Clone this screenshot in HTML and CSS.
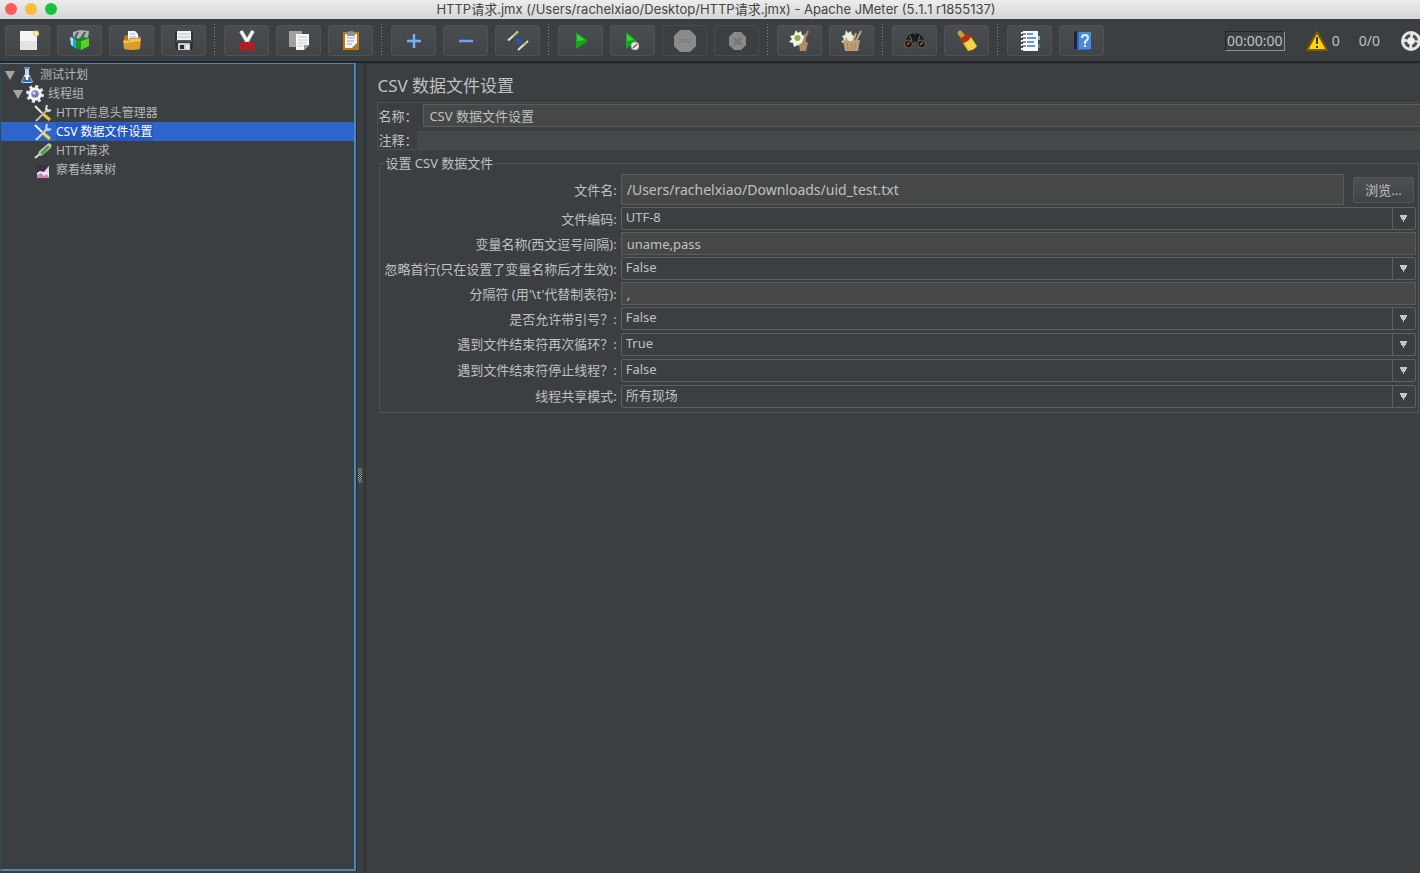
FILE: index.html
```
<!DOCTYPE html>
<html lang="zh-CN">
<head>
<meta charset="utf-8">
<meta name="viewport" content="width=device-width, initial-scale=1">
<title>HTTP请求.jmx - Apache JMeter</title>
<link rel="stylesheet" href="styles.css">
</head>
<body>
<div class="window">
<header class="titlebar">
  <div class="lights">
    <button class="light light-close" aria-label="关闭"></button>
    <button class="light light-min" aria-label="最小化"></button>
    <button class="light light-zoom" aria-label="缩放"></button>
  </div>
  <h1 class="window-title">HTTP请求.jmx (/Users/rachelxiao/Desktop/HTTP请求.jmx) - Apache JMeter (5.1.1 r1855137)</h1>
</header>

<div class="toolbar" role="toolbar" aria-label="工具栏">
  <button class="tool" aria-label="新建"><svg viewBox="0 0 24 24"><path d="M4 2h17v19H4z" fill="#f4f4f4"/><path d="M4 12h17v9H4z" fill="#e3e3e3"/><circle cx="20" cy="4.500" r="3" fill="#e9d77a"/><circle cx="20" cy="4.500" r="1.500" fill="#fff6c0"/></svg></button>
  <button class="tool" aria-label="模板"><svg viewBox="0 0 24 24"><path d="M5 3l7-2 9 1-1 7-9 1-6-2z" fill="#a9b3b5"/><path d="M6 8l3-5 2 0-3 6zm6 1 4-6 2 0-3 6z" fill="#4e595c"/><path d="M2 8l7 3v9l-5-3z" fill="#20a7cf"/><path d="M2 8l3 1v8l-2-1z" fill="#9be8f3"/><path d="M8 11l5 1v9l-5-2z" fill="#139a18"/><path d="M13 12l8-3v8l-8 4z" fill="#56d32a"/><path d="M9 10l6-2 6 1-8 3z" fill="#168c1a"/></svg></button>
  <button class="tool" aria-label="打开"><svg viewBox="0 0 24 24"><path d="M4 7l4-1h9l4 2v5H4z" fill="#b87d16"/><path d="M8 2h7l3 3v8H8z" fill="#f1f4fa"/><path d="M10 5h5M10 8h6" stroke="#a9b5ca"/><path d="M3 11h5l2-2h11l-1 11q-8 2-16 0z" fill="#dc9b2a"/><path d="M4 12h5l2-2h9v2l-16 2z" fill="#f6c760"/></svg></button>
  <button class="tool" aria-label="保存"><svg viewBox="0 0 24 24"><path d="M3 2h18v17l-2 2H5l-2-2z" fill="#303235"/><path d="M5 2h14v9H5z" fill="#edf2f7"/><path d="M6 5h12M6 8h12" stroke="#b8c4d2"/><path d="M4 12h16" stroke="#73797f"/><path d="M6 14h12v7H6z" fill="#c9cacb"/><path d="M8 16h4v4H8z" fill="#292b2d"/><path d="M14 16h3v4h-3z" fill="#f0f0f0"/></svg></button>
  <span class="divider"></span>
  <button class="tool" aria-label="剪切"><svg viewBox="0 0 24 24"><path d="M6 2l7 12M18 2l-7 12" stroke="#c5c8c9" stroke-width="4"/><path d="M6 2l6 10M18 2l-6 10" stroke="#fff" stroke-width="2"/><circle cx="8" cy="17.500" r="2.700" fill="none" stroke="#c5161d" stroke-width="3"/><circle cx="16" cy="17.500" r="2.700" fill="none" stroke="#c5161d" stroke-width="3"/><path d="M8 13h8l-2 4h-4z" fill="#c5161d"/></svg></button>
  <button class="tool" aria-label="复制"><svg viewBox="0 0 24 24"><path d="M2 2h13v16H2z" fill="#a0a2a2"/><path d="M9 5h13v11l-5 5H9z" fill="#f5f5f5"/><path d="M11 8h9M11 11h9M11 14h8M11 17h5" stroke="#c7c9ca"/><path d="M17 21v-5h5z" fill="#999"/></svg></button>
  <button class="tool" aria-label="粘贴"><svg viewBox="0 0 24 24"><path d="M4 3h16v18H4z" fill="#b87912"/><path d="M6 5h12v14H6z" fill="#f3f3f3"/><path d="M8 5q0-3 4-3t4 3v2H8z" fill="#909391"/><path d="M8 9h8M8 12h7M8 15h5" stroke="#a0a3a6"/><path d="M18 14v5h-5z" fill="#778057"/></svg></button>
  <span class="divider"></span>
  <button class="tool" aria-label="展开"><svg viewBox="0 0 24 24"><path d="M12 5v14M5 12h14" stroke="#77b0f5" stroke-width="2.500"/></svg></button>
  <button class="tool" aria-label="折叠"><svg viewBox="0 0 24 24"><path d="M5 12h14" stroke="#6ca5ef" stroke-width="2.500"/></svg></button>
  <button class="tool" aria-label="切换"><svg viewBox="0 0 24 24"><path d="M2 11.500l10-9M12 21l10-9" stroke="#e3e6d6" stroke-width="2"/><path d="M7 7l4-4M17 16l4-3" stroke="#a8ba5d" stroke-width="1.500"/><path d="M9 8l3 2 3-1 1 6-6 0 1-2z" fill="#2d55a5"/></svg></button>
  <span class="divider"></span>
  <button class="tool" aria-label="启动"><svg viewBox="0 0 24 24"><path d="M7 3l12 9-12 8z" fill="#11a818"/><path d="M8 5l8 6-8 1z" fill="#38cf3d"/></svg></button>
  <button class="tool" aria-label="无停顿启动"><svg viewBox="0 0 24 24"><path d="M5 3l11 9-11 8z" fill="#11a818"/><path d="M6 5l7 6-7 1z" fill="#38cf3d"/><circle cx="14" cy="17" r="3.800" fill="#f6eeee" stroke="#b9c2c8"/><path d="M12 19l4-4" stroke="#bf3940" stroke-width="1.500"/></svg></button>
  <button class="tool" aria-label="停止" disabled><svg viewBox="0 0 24 24"><path d="M7 1h10l6 6v10l-6 6H7l-6-6V7z" fill="#8a8c8c"/><path d="M6 12h12" stroke="#818484" stroke-width="4"/></svg></button>
  <button class="tool" aria-label="关闭线程" disabled><svg viewBox="0 0 24 24"><path d="M9 3h7l5 5v8l-5 5H9l-5-5V8z" fill="#888a8a"/><path d="M9 9l7 7M16 9l-7 7" stroke="#757879" stroke-width="2.500"/></svg></button>
  <span class="divider"></span>
  <button class="tool" aria-label="清除"><svg viewBox="0 0 24 24"><path d="M8 1l2 3 3-2 1 4 4 1-2 3 2 4-4 0-1 4-3-2-4 2-1-4-4-1 3-3-2-3 4-1z" fill="#f2f4e8"/><circle cx="9.500" cy="9" r="3" fill="#8eaf43"/><path d="M11 15l9-2-2 9h-6z" fill="#b58d62"/><path d="M14 16l6-14M17 17V5" stroke="#a98961" stroke-width="2"/></svg></button>
  <button class="tool" aria-label="清除全部"><svg viewBox="0 0 24 24"><path d="M6 1l2 3 3-2 1 4 3 1-2 3 1 4-6 2-4-2-3-1 3-3-2-3 3-1z" fill="#ece9dc"/><path d="M3 11l7 1 10-1-2 11H5z" fill="#bd9f78"/><path d="M13 13l3-9M16 12l5-10M7 13l-1-4" stroke="#b8a583" stroke-width="2"/><path d="M7 14l1 7M12 14v7M16 14l-2 7" stroke="#a78661"/></svg></button>
  <span class="divider"></span>
  <button class="tool" aria-label="查找"><svg viewBox="0 0 24 24"><path d="M5 7l5-3 2 2 2-2 5 3 4 8-8 3-2-6h-2l-2 6-8-3z" fill="#191a1b"/><path d="M7 7l2 5M17 7l-2 5" stroke="#74736c"/><circle cx="5.500" cy="15" r="4" fill="#1b1918" stroke="#756657"/><circle cx="18.500" cy="15" r="4" fill="#1b1918" stroke="#756657"/><path d="M4 16l3-3M17 16l3-3" stroke="#946b4b" stroke-width="1.500"/></svg></button>
  <button class="tool" aria-label="重置搜索"><svg viewBox="0 0 24 24"><path d="M5 4l4 5" stroke="#c79c3e" stroke-width="5" stroke-linecap="round"/><path d="M5 10l8-6 3 4-8 7z" fill="#b62c18"/><path d="M8 14q5-1 8-6l6 9q-2 4-9 5z" fill="#f2cd2d"/><path d="M12 14l4 6M15 12l4 6" stroke="#fff08a"/></svg></button>
  <span class="divider"></span>
  <button class="tool" aria-label="函数助手"><svg viewBox="0 0 24 24"><path d="M5 2h15v20H5z" fill="#f7f9fc"/><path d="M9 5h6M9 9h9M9 13h7M9 17h8" stroke="#3b76d0" stroke-width="1.500"/><path d="M3 4h5M3 8h5M3 12h5M3 16h5M3 20h5" stroke="#f7f9fc" stroke-width="2"/><path d="M4 5h4M4 9h4M4 13h4M4 17h4" stroke="#23262c"/><path d="M20 7h2v4h-2z" fill="#79b7d8"/><path d="M20 15h2v4h-2z" fill="#339d65"/></svg></button>
  <button class="tool" aria-label="帮助"><svg viewBox="0 0 24 24"><path d="M4 3l4-1v19l-4-1z" fill="#1c2632"/><path d="M7 3h13v18H7z" fill="#2e69b6"/><path d="M9 3h12v17H9z" fill="#4b8bd8"/><path d="M12 9q0-3 3-3t3 3q0 1-3 4v2M15 16v2" fill="none" stroke="#e7f1ff" stroke-width="2"/></svg></button>
  <div class="status">
    <output class="timer">00:00:00</output>
    <button class="warn"><svg viewBox="0 0 24 22"><path d="M12 2L22 20H2z" fill="#ffd600" stroke="#765d0b" stroke-width="2" stroke-linejoin="round"/><path d="M12 7v7M12 16v2" stroke="#3b3410" stroke-width="2"/></svg>0</button>
    <span class="threads">0/0</span>
    <svg class="lifebuoy" viewBox="0 0 20 22"><circle cx="11" cy="11" r="10" fill="#e5e5e5"/><circle cx="11" cy="11" r="5.500" fill="none" stroke="#4c4e50" stroke-width="3" stroke-dasharray="5.600 3.040" stroke-dashoffset="-1.520"/><circle cx="11" cy="11" r="3" fill="#f2f2f2"/></svg>
  </div>
</div>

<div class="workspace">
  <nav class="tree-pane" aria-label="测试计划树">
    <ul class="tree" role="tree">
      <li class="node depth-0" role="treeitem"><svg class="twist" viewBox="0 0 12 12"><path d="M1 2h10L6 11z"/></svg><svg class="node-icon" viewBox="0 0 16 18"><path d="M6 2h4v6l4 8-2 1H4l-2-1 4-8z" fill="#c4dbe7"/><path d="M5 11h6l2 5H3z" fill="#2468b7"/><path d="M8 9v5" stroke="#fff" stroke-width="2.500"/><path d="M5 2h6" stroke="#5f92bd" stroke-width="2"/></svg>测试计划</li>
      <li class="node depth-1" role="treeitem"><svg class="twist" viewBox="0 0 12 12"><path d="M1 2h10L6 11z"/></svg><svg class="node-icon" viewBox="0 0 16 18"><circle cx="8" cy="9" r="7.500" fill="none" stroke="#e4e6ec" stroke-width="3" stroke-dasharray="3 2.890"/><circle cx="8" cy="9" r="5.500" fill="#cad0df" stroke="#f5f6fa" stroke-width="2.500"/><circle cx="8" cy="9" r="3.500" fill="#7180b0"/><circle cx="7" cy="8" r="1.500" fill="#d5dcf4"/></svg>线程组</li>
      <li class="node depth-2" role="treeitem"><svg class="node-icon" viewBox="0 0 16 18"><path d="M1 17L13 5" stroke="#b8bcbd" stroke-width="2"/><path d="M12 1l-1 4 2 2 3-1" fill="none" stroke="#d8dcde" stroke-width="2"/><path d="M0 2l7 7" stroke="#eff0e9" stroke-width="2"/><path d="M8 10l7 6" stroke="#d9ae2f" stroke-width="3.500"/><path d="M8 10l6 5" stroke="#ffe270"/></svg>HTTP信息头管理器</li>
      <li class="node depth-2 selected" role="treeitem" aria-selected="true"><svg class="node-icon" viewBox="0 0 16 18"><path d="M1 17L13 5" stroke="#d0dbe2" stroke-width="2"/><path d="M12 1l-1 4 2 2 3-1" fill="none" stroke="#b8d4ee" stroke-width="2"/><path d="M0 2l7 7" stroke="#eff0e9" stroke-width="2"/><path d="M8 10l7 6" stroke="#e0c840" stroke-width="3.500"/><path d="M8 10l6 5" stroke="#ffe98a"/></svg><span class="node-text">CSV 数据文件设置</span></li>
      <li class="node depth-2" role="treeitem"><svg class="node-icon" viewBox="0 0 16 18"><path d="M0 16l6-5" stroke="#d9d9d9" stroke-width="2"/><path d="M6 11l8-7" stroke="#c1cbb9" stroke-width="5" stroke-linecap="round"/><path d="M7 11l6-6" stroke="#4c9c4c" stroke-width="3" stroke-linecap="round"/></svg>HTTP请求</li>
      <li class="node depth-2" role="treeitem"><svg class="node-icon" viewBox="0 0 16 18"><path d="M2 4h12v13H2z" fill="#393248"/><path d="M2 12l3-2 4 1 5-6v12H2z" fill="#f3e6f2"/><path d="M2 14l4-2 3 3 3-2 2 4H2z" fill="#cf83b5"/><path d="M9 11l5-6v7z" fill="#d9d4ef"/></svg>察看结果树</li>
    </ul>
  </nav>
  <div class="splitter" role="separator"><span class="grip"></span></div>

  <main class="editor">
    <h2 class="editor-title">CSV 数据文件设置</h2>
    <div class="identity">
      <label for="name">名称：</label><input id="name" class="field name-field" value="CSV 数据文件设置">
      <label for="comment">注释：</label><input id="comment" class="field comment-field">
    </div>
    <fieldset class="settings">
      <legend>设置 CSV 数据文件</legend>
      <div class="form">
        <label for="file">文件名:</label>
        <div class="file-row"><input id="file" class="field file-field" value="/Users/rachelxiao/Downloads/uid_test.txt"><button class="browse">浏览...</button></div>
        <label for="enc">文件编码:</label>
        <div class="combo"><select id="enc"><option>UTF-8</option></select></div>
        <label for="vars">变量名称(西文逗号间隔):</label>
        <input id="vars" class="field" value="uname,pass">
        <label for="skip">忽略首行(只在设置了变量名称后才生效):</label>
        <div class="combo"><select id="skip"><option>False</option><option>True</option></select></div>
        <label for="delim">分隔符 (用'\t'代替制表符):</label>
        <input id="delim" class="field" value=",">
        <label for="quoted">是否允许带引号？:</label>
        <div class="combo"><select id="quoted"><option>False</option><option>True</option></select></div>
        <label for="recycle">遇到文件结束符再次循环？:</label>
        <div class="combo stacked"><select id="recycle"><option>True</option><option>False</option></select></div>
        <label for="stop">遇到文件结束符停止线程？:</label>
        <div class="combo stacked"><select id="stop"><option>False</option><option>True</option></select></div>
        <label for="share">线程共享模式:</label>
        <div class="combo stacked"><select id="share"><option>所有现场</option></select></div>
      </div>
    </fieldset>
  </main>
</div>
</div>
</body>
</html>
```
FILE: styles.css
```
* { box-sizing: border-box; }
body {
  margin: 0;
  background: #3c3f41;
  color: #bfc1c2;
  font: 13px/18px "Noto Sans", "Noto Sans CJK SC", sans-serif;
}
button, input, select { font: inherit; color: inherit; margin: 0; }
.window { display: flex; flex-direction: column; height: 100vh; overflow: hidden; }

.titlebar {
  display: grid;
  grid-template-columns: 1fr auto 1fr;
  align-items: center;
  height: 19px;
  flex: none;
  padding: 0 5px 2px;
  background: linear-gradient(#ececec, #d6d6d6);
}
.lights { display: flex; gap: 8px; }
.light { width: 12px; height: 12px; padding: 0; border: 0; border-radius: 50%; }
.light-close { background: #fc5b57; }
.light-min { background: #fdbb3c; }
.light-zoom { background: #15c33f; }
.window-title {
  margin: 0;
  padding-left: 12px;
  color: #444;
  font: 13px/16px Inter, "Noto Sans CJK SC", sans-serif;
  font-kerning: none;
  white-space: nowrap;
}

.toolbar {
  display: flex;
  align-items: center;
  gap: 7px;
  flex: none;
  height: 42px;
  padding: 1px 0 0 5px;
}
.tool {
  display: grid;
  place-items: center;
  flex: none;
  width: 45px;
  height: 31px;
  padding: 0;
  border: 1px solid #505355;
  border-radius: 3px;
  background: linear-gradient(#4a4e50, #414547);
}
.tool:disabled { background: #3c3f41; border-color: #484b4d; }
.tool svg { width: 24px; height: 24px; }
.divider {
  flex: none;
  width: 4px;
  height: 33px;
  background: repeating-linear-gradient(#85888a 0 1px, transparent 1px 3px) 1px 0 / 1px 100% no-repeat;
}
.status { display: flex; align-items: center; margin-left: auto; flex: none; font-size: 14px; }
.timer {
  width: 60px;
  height: 20px;
  border: 1px solid;
  border-color: #232526 #8e9192 #8e9192 #232526;
  line-height: 18px;
  text-align: center;
}
.warn { display: flex; align-items: center; gap: 3px; padding: 0; margin-left: 20px; border: 0; background: none; }
.warn svg { width: 24px; height: 22px; }
.threads { margin-left: 19px; }
.lifebuoy { width: 20px; height: 22px; margin-left: 20px; }

.workspace { display: flex; flex: 1; min-height: 0; margin-bottom: 2px; border-top: 2px solid #242627; }
.tree-pane { flex: none; width: 25.1%; border: 1px solid #4a88b5; border-width: 1px 2px 2px 1px; border-left-color: #2d4a5e; }
.tree { margin: 0; padding: 1px 0 0; list-style: none; font-size: 12px; }
.node { display: flex; align-items: center; height: 19px; color: #b4b7b9; white-space: nowrap; }
.twist { width: 12px; height: 12px; margin-right: 3px; fill: #a4a6a3; }
.node-icon { width: 16px; height: 18px; margin-right: 5px; overflow: visible; }
.depth-0 { padding-left: 3px; }
.depth-1 { padding-left: 11px; }
.depth-2 { padding-left: 34px; }
.selected { background: #2f65ca; color: #fff; }
.node-text { background: #2559c0; }
.splitter {
  display: grid;
  place-items: center start;
  flex: none;
  width: 10px;
  padding: 16px 0 0 1px;
  border-left: 1px solid #292c2e;
  border-right: 2px solid #303338;
}
.grip {
  width: 4px;
  height: 15px;
  background: repeating-conic-gradient(#9a9c98 0 25%, #303334 0 50%) 0 0 / 2px 2px;
}

.editor { flex: 1; min-width: 0; padding: 11px 0 0 11px; border-top: 1px solid #313436; }
.editor-title { margin: 0 0 5px; font-size: 17px; line-height: 22px; font-weight: 400; }
.identity {
  display: grid;
  grid-template-columns: 39px 1fr;
  row-gap: 4px;
  align-items: center;
  border: 1px solid #4b4e50;
  border-right: 0;
  padding: 1px 0 0;
}
.field {
  min-width: 0;
  width: 100%;
  height: 23px;
  padding: 0 5px;
  border: 1px solid #5a5d5c;
  background: #454846;
  outline: 0;
}
.name-field { width: calc(100% - 6px); margin-left: 6px; border-right: 0; }
.comment-field { height: 18px; border: 0; background: #45494a; }
.settings {
  min-width: 0;
  margin: 4px 1px 0 2px;
  padding: 2px 2px 4px 4px;
  border: 1px solid #505355;
}
.settings legend { padding: 0 1px; }
.form {
  display: grid;
  grid-template-columns: max-content 1fr;
  column-gap: 4px;
  row-gap: 2px;
  align-items: center;
}
.form label { text-align: right; }
.file-row { display: flex; align-items: center; gap: 9px; padding-right: 2px; }
.file-field { flex: 1; height: 31px; font-size: 14px; }
.browse {
  width: 61px;
  height: 26px;
  padding: 0;
  border: 1px solid #55585a;
  border-radius: 2px;
  background: linear-gradient(#4d5153, #404446);
}
.combo { position: relative; height: 23px; }
.combo select {
  display: block;
  width: 100%;
  height: 100%;
  padding: 0 28px 3px 4px;
  border: 1px solid #5e6163;
  border-radius: 2px;
  background: #3c3f41;
  appearance: none;
  outline: 0;
}
.combo::after {
  content: "";
  position: absolute;
  top: 1px;
  bottom: 1px;
  right: 1px;
  width: 22px;
  border-left: 1px solid #5e6163;
  background: conic-gradient(from -30deg at 50% 100%, #c3c5c6 60deg, transparent 0) 6px 7px / 9px 7px no-repeat;
  pointer-events: none;
}
.stacked { margin-top: 1px; }
```
